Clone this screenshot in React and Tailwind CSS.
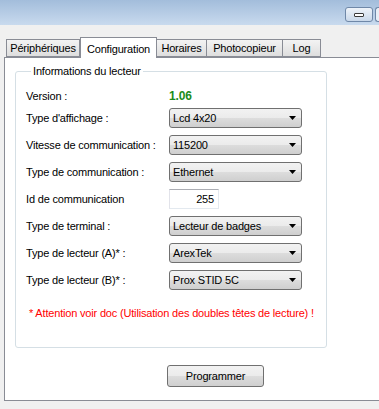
import React from 'react';

const font = { fontFamily: '"Liberation Sans", Arial, sans-serif' };

const Arrow = () => (
  <svg width="7" height="4" viewBox="0 0 7 4" className="shrink-0">
    <path d="M0 0H7L3.5 4Z" fill="#000" />
  </svg>
);

const Select = ({ value }) => (
  <div className="h-[20px] w-[133px] flex items-center justify-between pl-[3px] pr-[5px] border border-[#707070] rounded-[3px] bg-[linear-gradient(#f2f2f2_0%,#ebebeb_50%,#dddddd_50%,#cfcfcf_100%)]">
    <span className="leading-none">{value}</span>
    <Arrow />
  </div>
);

const Row = ({ label, children }) => (
  <div className="grid grid-cols-[143px_133px] items-center h-[20px]">
    <span>{label}</span>
    <div>{children}</div>
  </div>
);

const tabs = [
  { name: 'Périphériques', w: 'w-[74px]' },
  { name: 'Configuration', w: 'w-[77px]', active: true },
  { name: 'Horaires', w: 'w-[50px]' },
  { name: 'Photocopieur', w: 'w-[76px]' },
  { name: 'Log', w: 'w-[38px]' },
];

export default function App() {
  return (
    <div className="w-[379px] h-[409px] bg-[#f0f0f0] overflow-hidden text-[11px] tracking-[-0.18px] text-black" style={font}>
      {/* title bar */}
      <div className="h-[25px] flex justify-end items-start pt-[7px] gap-[2px] bg-[linear-gradient(#a3bddb,#c8daee)]">
        <div className="w-[28px] h-[15px] border border-[#6f88a8] rounded-[3px] bg-[linear-gradient(#eef3f9,#c9d8ea)] flex items-center justify-center">
          <div className="w-[10px] h-[4px] border border-[#3a3a3a] bg-white rounded-[1px]" />
        </div>
        <div className="w-[4px] h-[15px] border border-r-0 border-[#6f88a8] rounded-l-[3px] bg-[#e8eef6]" />
      </div>

      {/* tabs */}
      <div className="pt-[12px] pl-[6px] flex items-end h-[32px]">
        {tabs.map((t) =>
          t.active ? (
            <div
              key={t.name}
              className={`${t.w} h-[21px] -mb-px relative z-10 bg-white border border-b-0 border-[#898c95] flex items-start justify-center pt-[3px]`}
            >
              {t.name}
            </div>
          ) : (
            <div
              key={t.name}
              className={`${t.w} h-[18px] border border-l-0 first:border-l border-[#898c95] bg-[linear-gradient(#f3f3f3,#dedede)] flex items-center justify-center`}
            >
              {t.name}
            </div>
          )
        )}
      </div>

      {/* tab page */}
      <div className="ml-[4px] h-[344px] bg-white border border-r-0 border-[#898c95] pl-[10px] pt-[7px]">
        <fieldset className="w-[312px] border border-[#d5dfe5] rounded-[3px] pl-[10px] pb-[27px]">
          <legend className="ml-[5px] px-[2px] leading-[13px]">Informations du lecteur</legend>
          <div className="flex flex-col pt-[8px]">
            <div className="grid grid-cols-[143px_133px] items-center h-[20px]">
              <span>Version :</span>
              <span className="font-bold text-[12px] text-[#1a8c1a]">1.06</span>
            </div>
            <div className="flex flex-col gap-[7px] mt-[2px]">
              <Row label="Type d'affichage :"><Select value="Lcd 4x20" /></Row>
              <Row label="Vitesse de communication :"><Select value="115200" /></Row>
              <Row label="Type de communication :"><Select value="Ethernet" /></Row>
              <Row label="Id de communication">
                <div className="w-[50px] h-[20px] border border-[#abadb3] border-r-[#e3e9ef] border-b-[#e3e9ef] border-l-[#e2e3ea] flex items-center justify-end pr-[4px]">
                  255
                </div>
              </Row>
              <Row label="Type de terminal :"><Select value="Lecteur de badges" /></Row>
              <Row label="Type de lecteur (A)* :"><Select value="ArexTek" /></Row>
              <Row label="Type de lecteur (B)* :"><Select value="Prox STID 5C" /></Row>
            </div>
            <p className="mt-[16px] ml-[3px] text-[#ff0000] leading-[14px]">
              * Attention voir doc (Utilisation des doubles têtes de lecture) !
            </p>
          </div>
        </fieldset>
        <button className="mt-[17px] ml-[152px] w-[97px] h-[22px] border border-[#707070] rounded-[3px] bg-[linear-gradient(#f2f2f2_0%,#ebebeb_50%,#dddddd_50%,#cfcfcf_100%)]">
          Programmer
        </button>
      </div>
    </div>
  );
}
